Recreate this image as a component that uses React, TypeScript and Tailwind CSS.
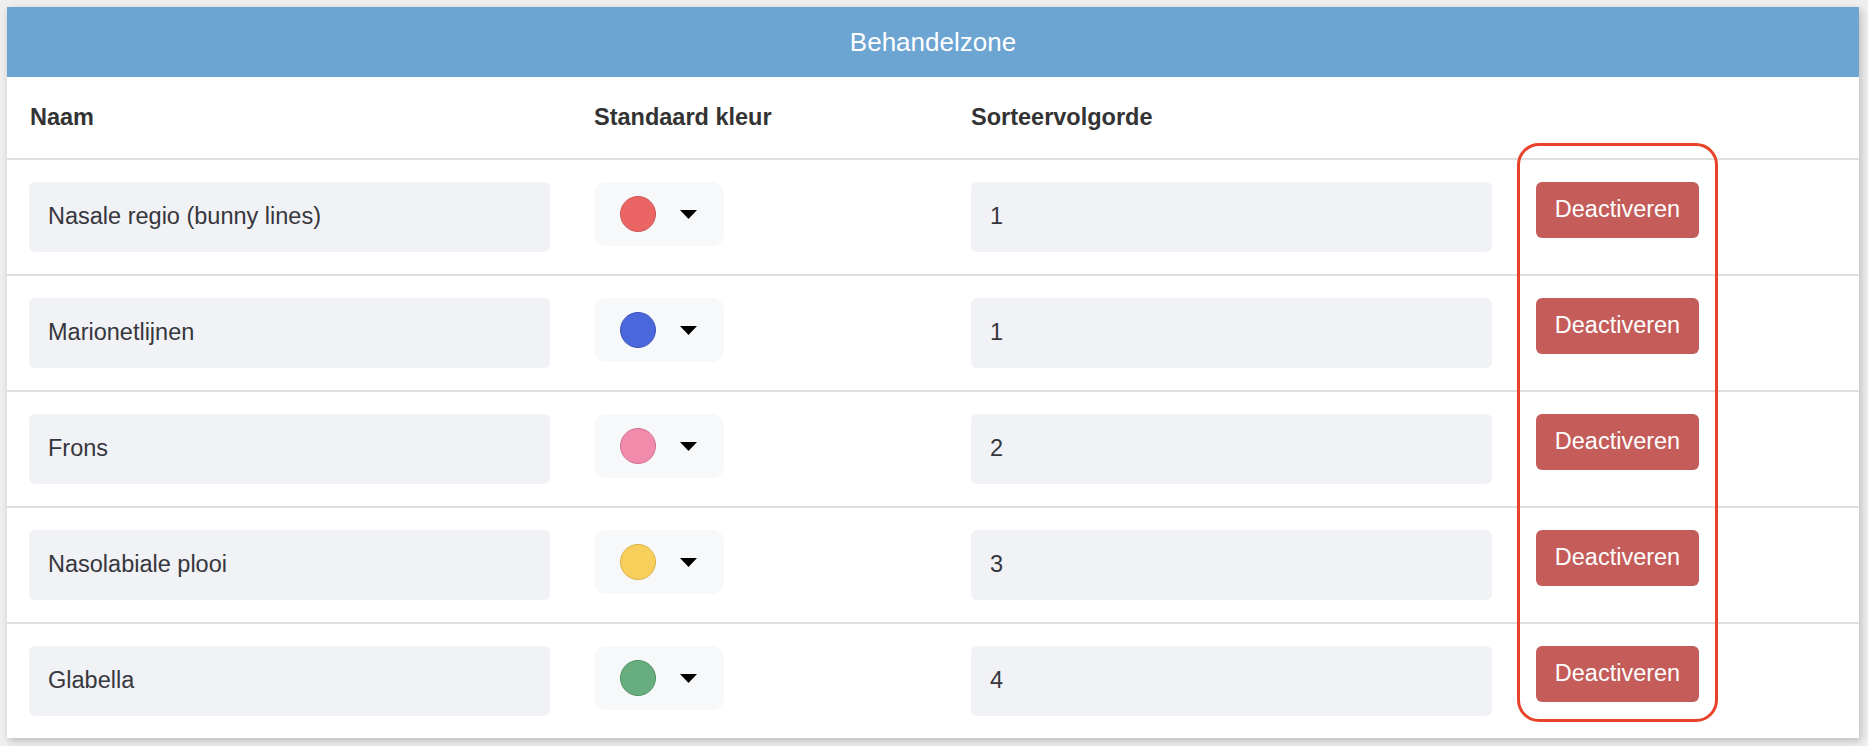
import React from 'react';

type Zone = {
  name: string;
  color: string;
  border: string;
  order: number;
};

const zones: Zone[] = [
  { name: 'Nasale regio (bunny lines)', color: '#ec6565', border: '#cf5252', order: 1 },
  { name: 'Marionetlijnen', color: '#4a68dc', border: '#3b56bd', order: 1 },
  { name: 'Frons', color: '#f08bab', border: '#d26f8f', order: 2 },
  { name: 'Nasolabiale plooi', color: '#f9cf5b', border: '#d9b043', order: 3 },
  { name: 'Glabella', color: '#67ad7d', border: '#4e9164', order: 4 },
];

function ColorPicker({ color, border }: { color: string; border: string }) {
  return (
    <button
      type="button"
      className="flex h-[64px] w-[130px] items-center rounded-[12px] bg-[#f7f8fa] pl-[26px]"
    >
      <span
        className="h-[36px] w-[36px] rounded-full border"
        style={{ backgroundColor: color, borderColor: border }}
      />
      <svg width="17" height="9" viewBox="0 0 17 9" className="ml-[24px]">
        <path d="M0 0 H17 L8.5 9 Z" fill="#000" />
      </svg>
    </button>
  );
}

export default function App() {
  return (
    <div className="min-h-[746px] bg-[#efefef] pl-[7px] pr-[9px] pt-[7px] font-['Liberation_Sans',Arial,sans-serif]">
      <div className="relative bg-white shadow-[2px_3px_8px_rgba(0,0,0,0.22)]">
        <div className="flex h-[70px] items-center justify-center bg-[#6ca4d2] text-[26px] text-white">
          Behandelzone
        </div>

        <div className="grid h-[81px] grid-cols-[565px_377px_565px_1fr] items-center pl-[22px] text-[23.5px] font-bold text-[#333]">
          <div className="pl-[1px]">Naam</div>
          <div>Standaard kleur</div>
          <div>Sorteervolgorde</div>
          <div />
        </div>

        {zones.map((z) => (
          <div
            key={z.name}
            className="grid grid-cols-[565px_377px_565px_1fr] items-start border-t-2 border-[#dedede] pb-[22px] pl-[22px] pt-[22px] text-[23.5px] text-[#36363c] last:pb-[19px]"
          >
            <div className="flex h-[70px] w-[521px] items-center rounded-[6px] bg-[#f1f2f6] pl-[19px]">
              {z.name}
            </div>
            <div>
              <ColorPicker color={z.color} border={z.border} />
            </div>
            <div className="flex h-[70px] w-[521px] items-center rounded-[6px] bg-[#f1f2f6] pl-[19px]">
              {z.order}
            </div>
            <div>
              <button
                type="button"
                className="h-[56px] w-[163px] rounded-[6px] bg-[#c45c5a] text-[23.5px] text-white"
              >
                Deactiveren
              </button>
            </div>
          </div>
        ))}

        {/* annotation outline round the buttons */}
        <div className="pointer-events-none absolute left-[1510px] top-[136px] h-[579px] w-[201px] rounded-[22px] border-[3px] border-[#e8432a]" />
      </div>
    </div>
  );
}
